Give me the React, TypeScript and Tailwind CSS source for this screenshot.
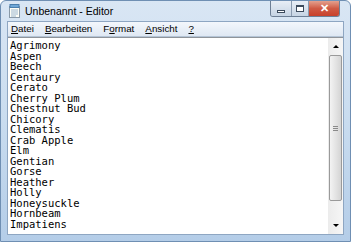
import React from 'react';

const lines = [
  'Agrimony',
  'Aspen',
  'Beech',
  'Centaury',
  'Cerato',
  'Cherry Plum',
  'Chestnut Bud',
  'Chicory',
  'Clematis',
  'Crab Apple',
  'Elm',
  'Gentian',
  'Gorse',
  'Heather',
  'Holly',
  'Honeysuckle',
  'Hornbeam',
  'Impatiens',
];

const menus = [
  { label: 'Datei', key: 'D' },
  { label: 'Bearbeiten', key: 'B' },
  { label: 'Format', key: 'o' },
  { label: 'Ansicht', key: 'A' },
  { label: '?', key: '?' },
];

function NotepadIcon() {
  return (
    <svg width="13" height="14" viewBox="0 0 13 14">
      <rect x="1.5" y="2.5" width="10" height="11" fill="#fdfdf6" stroke="#8a9aa8" />
      <rect x="2" y="0.5" width="9" height="3" fill="#6fa8d8" stroke="#4a7fae" />
      <line x1="3" y1="6" x2="10" y2="6" stroke="#9bb6cf" />
      <line x1="3" y1="8" x2="10" y2="8" stroke="#9bb6cf" />
      <line x1="3" y1="10" x2="10" y2="10" stroke="#9bb6cf" />
      <line x1="3" y1="12" x2="8" y2="12" stroke="#9bb6cf" />
    </svg>
  );
}

function MenuLabel({ label, k }: { label: string; k: string }) {
  const i = label.indexOf(k);
  if (i < 0) return <span>{label}</span>;
  return (
    <span>
      {label.slice(0, i)}
      <span className="underline underline-offset-[1px]">{label[i]}</span>
      {label.slice(i + 1)}
    </span>
  );
}

export default function App() {
  return (
    <div className="w-[351px] h-[242px] flex flex-col overflow-hidden rounded-t-[6px] border border-[#6f8fb3] bg-gradient-to-b from-[#d9e6f4] via-[#c9dcef] to-[#b4cde8] font-['Liberation_Sans',sans-serif]">
      {/* title bar */}
      <div className="h-[20px] flex items-start shrink-0">
        <div className="flex items-center h-full pl-[7px] gap-[4px]">
          <NotepadIcon />
          <span className="text-[10.5px] text-black leading-none">Unbenannt - Editor</span>
        </div>
        <div className="ml-auto mr-[10px] flex h-[16px] rounded-b-[3px] border border-t-0 border-[#6d7f95] overflow-hidden">
          <div className="w-[21px] flex items-center justify-center bg-gradient-to-b from-[#e8eef6] to-[#c6d4e4] border-r border-[#8a9bb0]">
            <div className="w-[8px] h-[3px] border border-[#3b4a5c] bg-white mt-[5px]" />
          </div>
          <div className="w-[17px] flex items-center justify-center bg-gradient-to-b from-[#e8eef6] to-[#c6d4e4] border-r border-[#8a9bb0]">
            <div className="w-[8px] h-[7px] border border-[#3b4a5c] border-t-2 bg-white" />
          </div>
          <div className="w-[30px] flex items-center justify-center bg-gradient-to-b from-[#e3a08e] via-[#cf5a44] to-[#c8402a]">
            <span className="text-white font-bold text-[11px] leading-none">✕</span>
          </div>
        </div>
      </div>

      {/* client area */}
      <div className="flex-1 flex flex-col mx-[6px] mb-[6px] border border-[#8ea6c2] bg-white min-h-0">
        <div className="h-[15px] shrink-0 flex items-center gap-[11px] pl-[3px] bg-gradient-to-b from-[#f3f7fc] to-[#dfe8f3] border-b border-[#b4c4d6] text-[9.8px] text-black">
          {menus.map((m) => (
            <MenuLabel key={m.label} label={m.label} k={m.key} />
          ))}
        </div>
        <div className="flex-1 flex min-h-0 border-t border-[#8f949a]">
          <div className="flex-1 pt-[2px] pl-[2px] font-['DejaVu_Sans_Mono',monospace] text-[10.5px] leading-[10.5px] text-black whitespace-pre overflow-hidden">
            {lines.map((l) => (
              <div key={l}>{l}</div>
            ))}
          </div>
          <div className="w-[15px] flex flex-col bg-gradient-to-r from-[#ececec] to-[#f6f6f6]">
            <div className="h-[17px] flex items-center justify-center">
              <div className="w-0 h-0 border-x-[3px] border-x-transparent border-b-[3px] border-b-black" />
            </div>
            <div className="flex-1 flex flex-col pb-[16px]">
              <div className="h-[146px] mx-[1px] rounded-[2px] border border-[#9a9a9a] bg-gradient-to-r from-[#f3f3f3] via-[#e4e4e4] to-[#d4d4d4] flex items-center justify-center">
                <div className="flex flex-col gap-[1px]">
                  <div className="w-[5px] h-px bg-[#8a8a8a]" />
                  <div className="w-[5px] h-px bg-[#8a8a8a]" />
                  <div className="w-[5px] h-px bg-[#8a8a8a]" />
                </div>
              </div>
            </div>
            <div className="h-[17px] flex items-center justify-center">
              <div className="w-0 h-0 border-x-[3px] border-x-transparent border-t-[3px] border-t-black" />
            </div>
          </div>
        </div>
      </div>
    </div>
  );
}
